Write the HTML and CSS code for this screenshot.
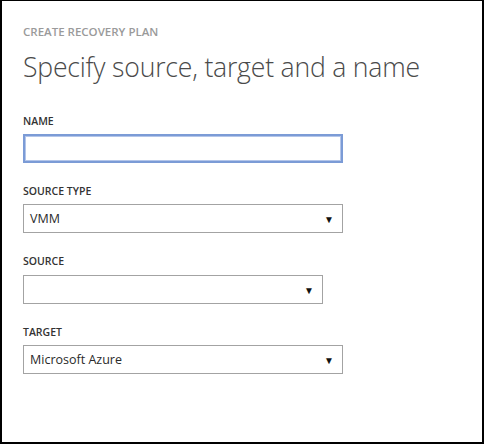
FILE: index.html
```html
<!DOCTYPE html>
<html>
<head>
<meta charset="utf-8">
<link rel="stylesheet" href="styles.css">
</head>
<body>
<div class="frame">
  <div class="eyebrow">CREATE RECOVERY PLAN</div>
  <h1 class="title">Specify source, target and a name</h1>
  <div class="form">
    <div class="field">
      <label class="label">NAME</label>
      <div class="input focused"></div>
    </div>
    <div class="field">
      <label class="label">SOURCE TYPE</label>
      <div class="select"><span class="value">VMM</span><span class="arrow">▼</span></div>
    </div>
    <div class="field">
      <label class="label">SOURCE</label>
      <div class="select narrow"><span class="value"></span><span class="arrow">▼</span></div>
    </div>
    <div class="field">
      <label class="label">TARGET</label>
      <div class="select"><span class="value">Microsoft Azure</span><span class="arrow">▼</span></div>
    </div>
  </div>
</div>
</body>
</html>
```
FILE: styles.css
```css
html, body {
  margin: 0;
  padding: 0;
  background: #000;
}
.frame {
  box-sizing: border-box;
  width: 484px;
  height: 444px;
  background: #fff;
  border-style: solid;
  border-color: #000;
  border-width: 1px 2px 2px 2px;
  padding: 24px 0 0 21px;
  font-family: "Open Sans", "Noto Sans", sans-serif;
}
.eyebrow {
  font-size: 11.5px;
  font-weight: 600;
  color: #9a9a9a;
  line-height: 14px;
  letter-spacing: 0;
}
.title {
  margin: 11px 0 0 0;
  font-size: 26.6px;
  font-weight: 300;
  color: #4a4a4a;
  line-height: 34px;
  letter-spacing: -0.2px;
}
.form {
  display: flex;
  flex-direction: column;
  gap: 22px;
  margin-top: 31px;
}
.field {
  display: flex;
  flex-direction: column;
  gap: 6px;
}
.label {
  font-size: 10.5px;
  font-weight: 600;
  color: #333;
  line-height: 13px;
}
.input, .select {
  box-sizing: border-box;
  width: 320px;
  height: 29px;
  background: #fff;
}
.input.focused {
  border: 2px solid #7b9bd6;
  box-shadow: inset 0 0 0 1px #b3c5e9;
}
.select {
  border: 1px solid #a3a3a3;
  display: flex;
  align-items: center;
  justify-content: space-between;
  padding: 0 8px 0 6px;
}
.select.narrow {
  width: 300px;
  margin-top: 1px;
}
.value {
  font-size: 12.5px;
  color: #2a2a2a;
}
.arrow {
  font-size: 10px;
  color: #111;
  line-height: 1;
}
```
